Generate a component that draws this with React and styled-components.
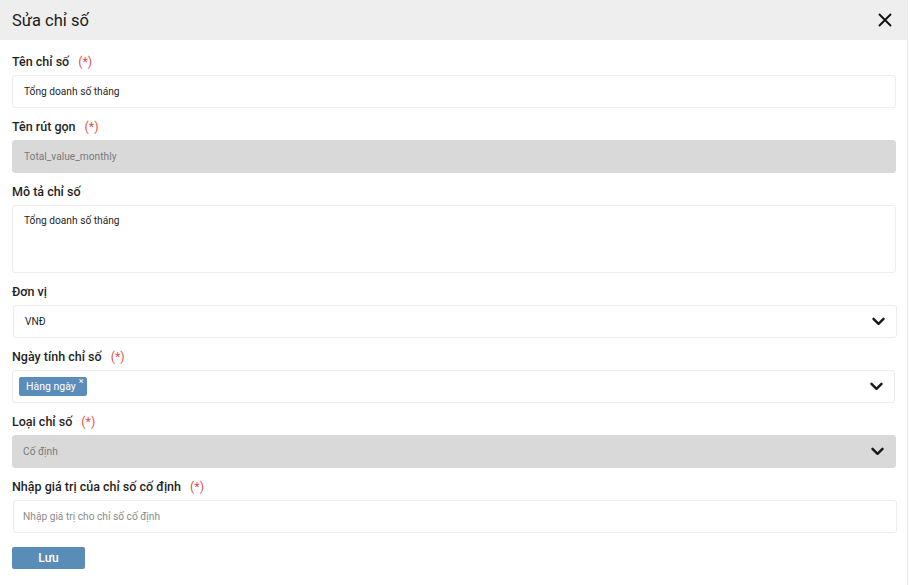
import styled, { createGlobalStyle } from "styled-components";

const GlobalStyle = createGlobalStyle`
  body {
    margin: 0;
    background: #ffffff;
    font-family: Roboto, "Noto Sans", sans-serif;
    color: #1f1f1f;
  }
`;

const Modal = styled.div`
  width: 907px;
  min-height: 585px;
  border-right: 1px solid #e8e8e8;
  background: #ffffff;
`;

const Header = styled.div`
  height: 40px;
  background: #eeeeee;
  display: flex;
  align-items: center;
  justify-content: space-between;
  padding: 0 15px 0 12px;
`;

const Title = styled.h2`
  margin: 0;
  font-size: 16.5px;
  font-weight: 400;
  color: #1b1b1b;
`;

const CloseButton = styled.button`
  border: none;
  background: none;
  padding: 0;
  display: flex;
  cursor: pointer;
`;

const Form = styled.form`
  padding: 13px 12px 0 12px;
  display: flex;
  flex-direction: column;
  gap: 10px;
`;

const Field = styled.div`
  display: flex;
  flex-direction: column;
  gap: 4px;
`;

const Label = styled.label`
  font-size: 12.5px;
  font-weight: 500;
  line-height: 18px;
  color: #1f1f1f;
`;

const Required = styled.span`
  color: #e0524f;
  font-weight: 400;
  margin-left: 9px;
`;

const Box = styled.div`
  box-sizing: border-box;
  height: ${(p) => (p.$tall ? "68px" : "33px")};
  width: ${(p) => p.$width || "884px"};
  border: 1px solid ${(p) => (p.$disabled ? "#d9d9d9" : "#ececec")};
  border-radius: 3px;
  background: ${(p) => (p.$disabled ? "#d9d9d9" : "#ffffff")};
  display: flex;
  align-items: ${(p) => (p.$tall ? "flex-start" : "center")};
  justify-content: space-between;
  padding: ${(p) => (p.$tall ? "9px 11px" : "0 11px 0 11px")};
  padding-left: ${(p) => p.$padLeft || "10px"};
  font-size: 10.2px;
  color: ${(p) => (p.$disabled ? "#7a7a7a" : p.$placeholder ? "#8a8a8a" : "#1f1f1f")};
`;

const Tag = styled.span`
  display: inline-flex;
  align-items: flex-start;
  height: 19px;
  padding: 0 3px 0 7px;
  background: #5a8dbb;
  border-radius: 2px;
  color: #ffffff;
  font-size: 10.5px;
  line-height: 19px;
  gap: 3px;
`;

const TagClose = styled.span`
  font-size: 9px;
  line-height: 8px;
`;

const SaveButton = styled.button`
  margin-top: 4px;
  width: 73px;
  height: 22px;
  border: none;
  border-radius: 2px;
  background: #5a8cb8;
  color: #ffffff;
  font-family: Roboto, sans-serif;
  font-size: 12px;
  font-weight: 500;
  cursor: pointer;
`;

const Chevron = () => (
  <svg width="13" height="9" viewBox="0 0 13 9">
    <polyline points="1.5,1.8 6.5,6.8 11.5,1.8" fill="none" stroke="#1a1a1a" strokeWidth="2.4" strokeLinecap="round" strokeLinejoin="round" />
  </svg>
);

const CloseIcon = () => (
  <svg width="14" height="14" viewBox="0 0 14 14">
    <path d="M1.5 1.5 L12.5 12.5 M12.5 1.5 L1.5 12.5" stroke="#111" strokeWidth="1.9" strokeLinecap="round" />
  </svg>
);

const App = () => (
  <>
    <GlobalStyle />
    <Modal>
      <Header>
        <Title>Sửa chỉ số</Title>
        <CloseButton type="button">
          <CloseIcon />
        </CloseButton>
      </Header>
      <Form onSubmit={(e) => e.preventDefault()}>
        <Field>
          <Label>
            Tên chỉ số<Required>(*)</Required>
          </Label>
          <Box $padLeft="11px">Tổng doanh số tháng</Box>
        </Field>
        <Field>
          <Label>
            Tên rút gọn<Required>(*)</Required>
          </Label>
          <Box $disabled $padLeft="11px">Total_value_monthly</Box>
        </Field>
        <Field>
          <Label>Mô tả chỉ số</Label>
          <Box $tall $padLeft="11px">Tổng doanh số tháng</Box>
        </Field>
        <Field>
          <Label>Đơn vị</Label>
          <Box $padLeft="11px" style={{ marginLeft: 1 }}>
            VNĐ
            <Chevron />
          </Box>
        </Field>
        <Field>
          <Label>
            Ngày tính chỉ số<Required>(*)</Required>
          </Label>
          <Box $width="883px" $padLeft="6px">
            <Tag>
              Hàng ngày<TagClose>×</TagClose>
            </Tag>
            <Chevron />
          </Box>
        </Field>
        <Field>
          <Label>
            Loại chỉ số<Required>(*)</Required>
          </Label>
          <Box $disabled>
            Cố định
            <Chevron />
          </Box>
        </Field>
        <Field>
          <Label>
            Nhập giá trị của chỉ số cố định<Required>(*)</Required>
          </Label>
          <Box $placeholder $padLeft="9px" style={{ marginLeft: 1 }}>
            Nhập giá trị cho chỉ số cố định
          </Box>
        </Field>
        <div>
          <SaveButton type="submit">Lưu</SaveButton>
        </div>
      </Form>
    </Modal>
  </>
);

export default App;
